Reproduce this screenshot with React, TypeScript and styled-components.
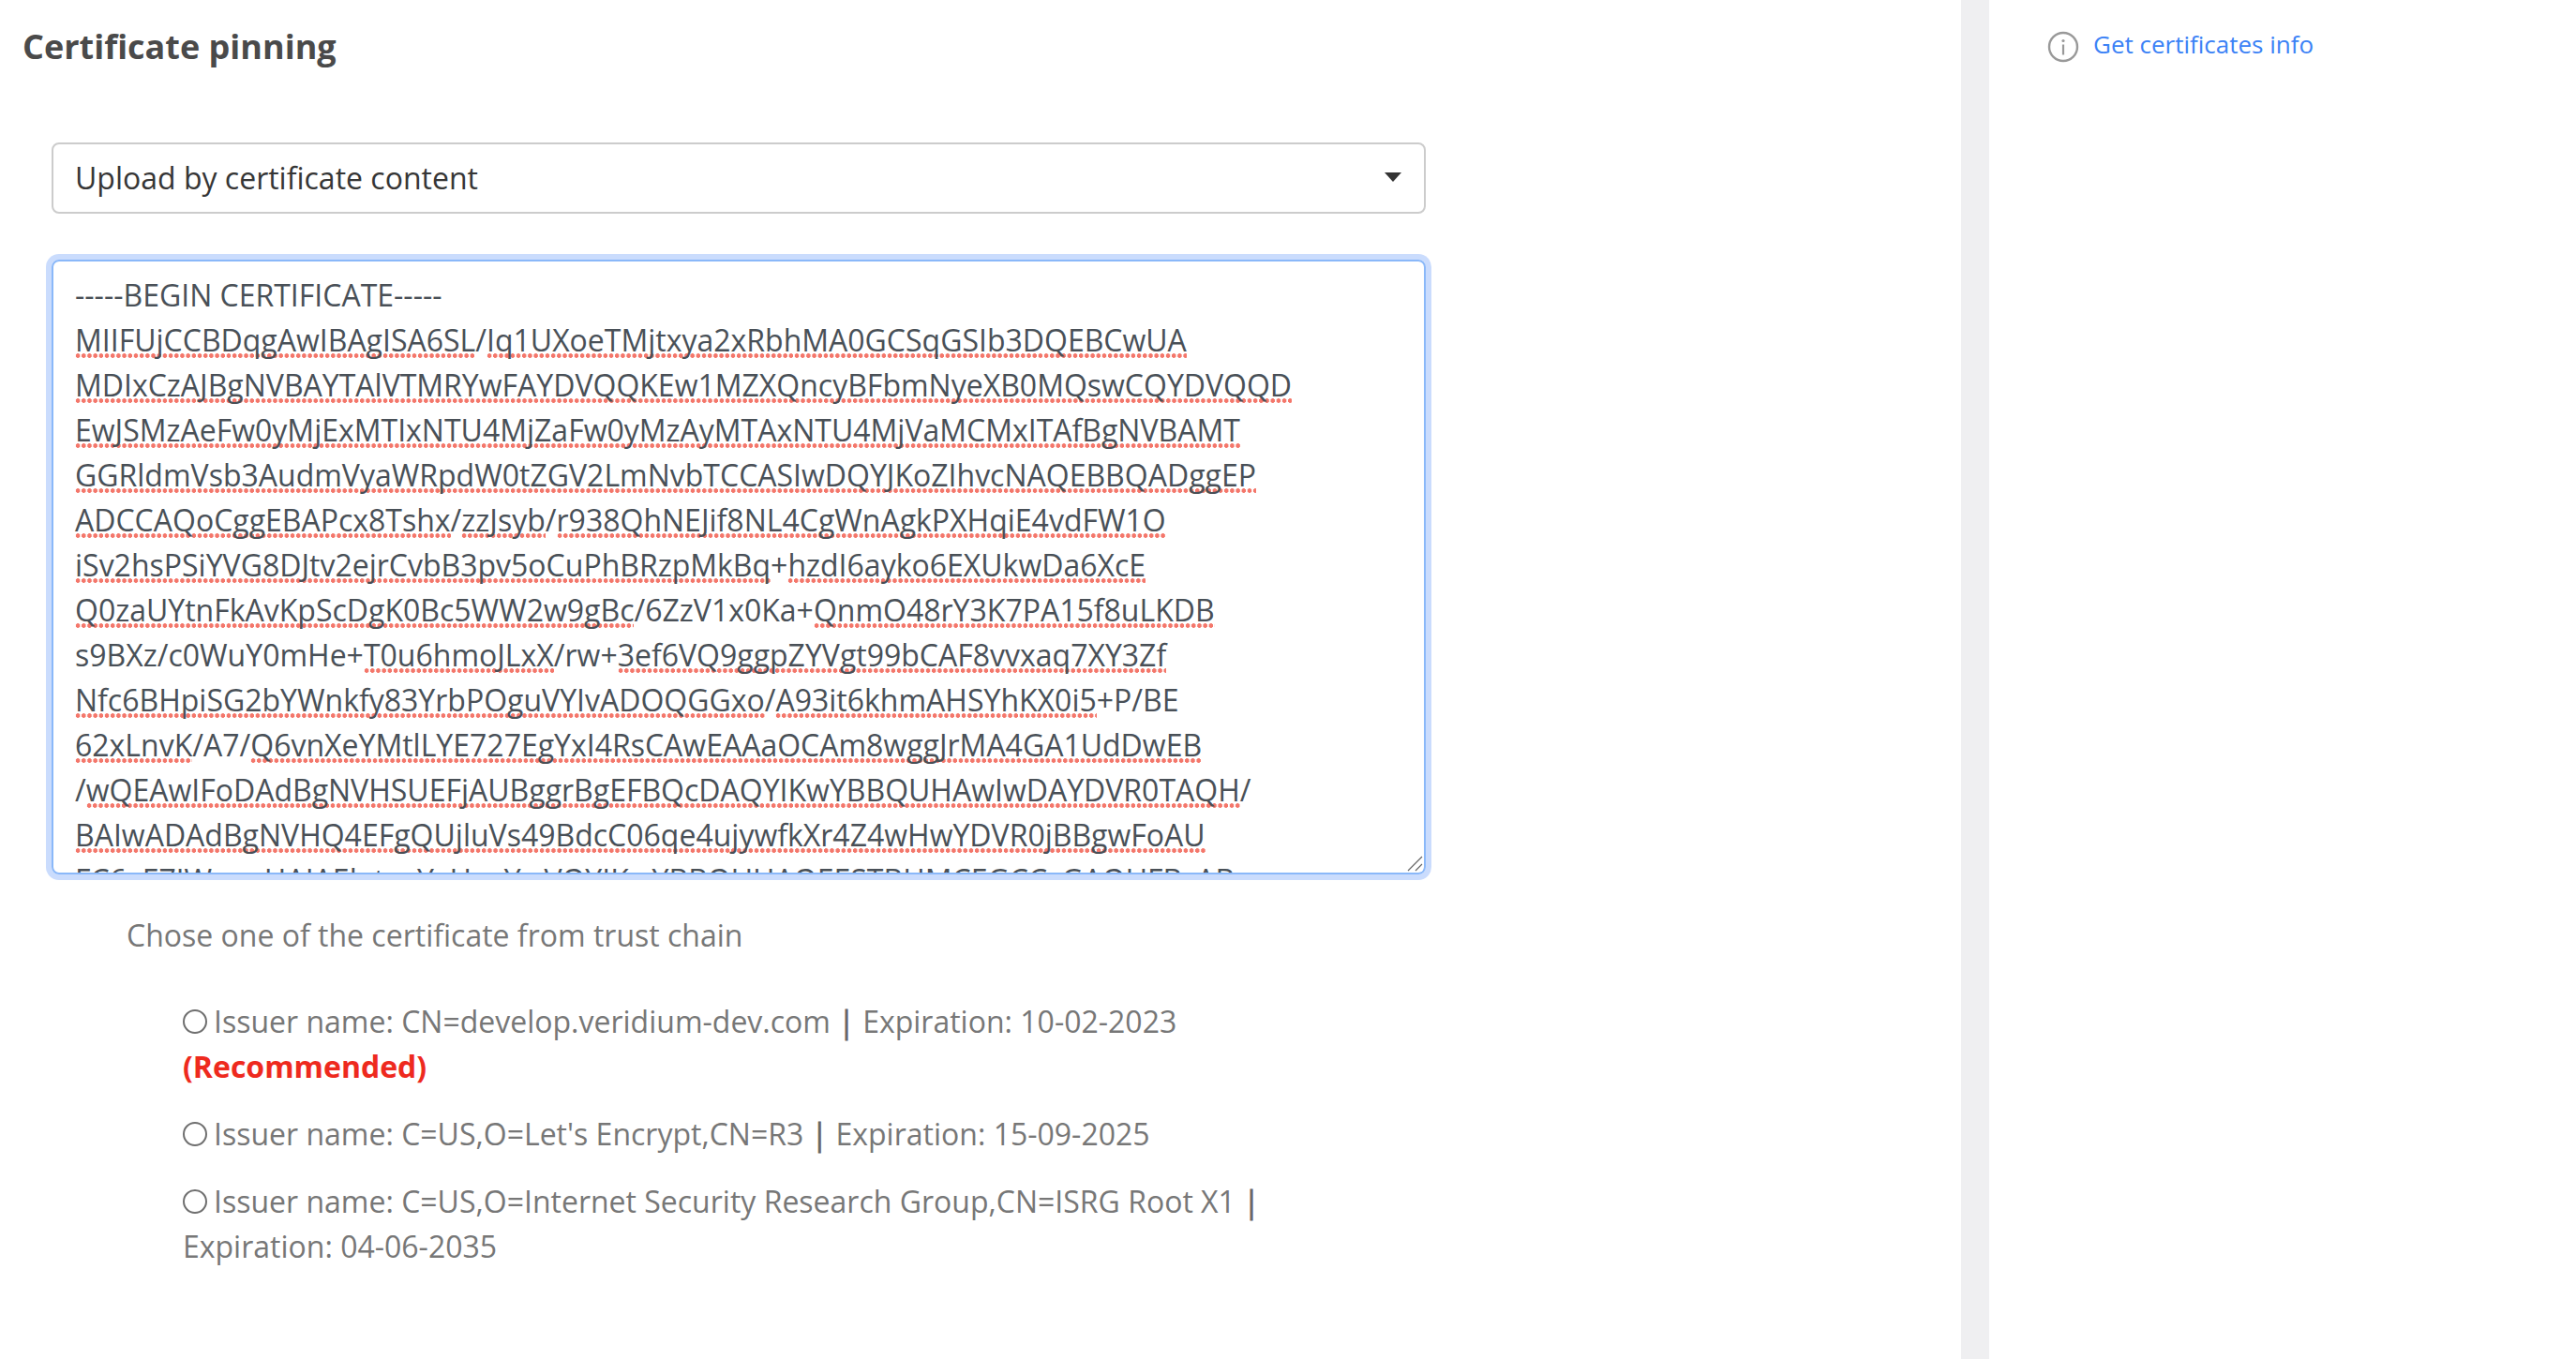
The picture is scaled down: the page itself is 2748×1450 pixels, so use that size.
import React from "react";
import styled, { createGlobalStyle } from "styled-components";

const Global = createGlobalStyle`
  html, body { margin: 0; padding: 0; background: #fff; }
  body { font-family: "Open Sans", "Liberation Sans", sans-serif; }
`;

const Page = styled.div`
  display: flex;
  height: 1450px;
  overflow: hidden;
  background: #fff;
`;

const Main = styled.main`
  width: 2092px;
  flex: none;
  padding: 26px 0 0 24px;
  box-sizing: border-box;
`;

const Divider = styled.div`
  width: 30px;
  flex: none;
  background: #efeff1;
`;

const Aside = styled.aside`
  flex: 1;
  display: flex;
  align-items: flex-start;
  gap: 15px;
  padding: 28px 0 0 62px;
`;

const Title = styled.h1`
  margin: 0;
  font-size: 36px;
  line-height: 48px;
  font-weight: 700;
  color: #4a4a4a;
`;

const Form = styled.div`
  width: 1466px;
  margin: 78px 0 0 31px;
`;

const SelectBox = styled.div`
  height: 76px;
  box-sizing: border-box;
  display: flex;
  align-items: center;
  justify-content: space-between;
  padding: 0 24px 2px 23px;
  border: 2px solid #cccccc;
  border-radius: 8px;
  font-size: 32px;
  color: #363636;
`;

const Caret = styled.span`
  width: 0;
  height: 0;
  border-left: 9px solid transparent;
  border-right: 9px solid transparent;
  border-top: 10px solid #333;
`;

const TextBox = styled.div`
  position: relative;
  height: 656px;
  box-sizing: border-box;
  margin-top: 49px;
  padding: 12px 23px 0;
  border: 2px solid #8ab8f9;
  border-radius: 8px;
  box-shadow: 0 0 0 6px #cadcfd;
  overflow: hidden;
  font-size: 32px;
  line-height: 48px;
  color: #495057;
  white-space: pre;
`;

const CertLine = styled.div`
  height: 48px;
`;

const Misspelled = styled.span`
  background-image: radial-gradient(circle at center, #f4776b 2.1px, transparent 2.6px);
  background-size: 6.2px 5px;
  background-repeat: repeat-x;
  background-position: left bottom 2px;
`;

const Grip = styled.svg`
  position: absolute;
  right: 1px;
  bottom: 1px;
  width: 17px;
  height: 17px;
  background: #fff;
`;

const Caption = styled.p`
  margin: 41px 0 0 80px;
  font-size: 32px;
  line-height: 48px;
  color: #777;
`;

const ChainList = styled.div`
  display: flex;
  flex-direction: column;
  gap: 24px;
  margin: 44px 0 0 140px;
  width: 1305px;
`;

const ChainRow = styled.label`
  display: block;
  font-size: 32px;
  line-height: 48px;
  color: #777;
`;

const Radio = styled.input`
  appearance: none;
  width: 26px;
  height: 26px;
  box-sizing: border-box;
  margin: 0 7px 0 0;
  border: 2px solid #6f6f6f;
  border-radius: 50%;
  background: #fff;
  vertical-align: -1px;
`;

const Pipe = styled.span`
  color: #666;
  -webkit-text-stroke: 0.8px #666;
`;

const Recommended = styled.strong`
  font-weight: 700;
  color: #ee2a1e;
`;

const InfoLink = styled.a`
  font-size: 26px;
  line-height: 38px;
  color: #3b82f6;
  text-decoration: none;
`;

const InfoIcon = styled.svg`
  width: 34px;
  height: 34px;
  flex: none;
  margin-top: 5px;
`;

const cert = [
  "-----BEGIN CERTIFICATE-----",
  "[MIIFUjCCBDqgAwIBAgISA6SL]/[Iq1UXoeTMjtxya2xRbhMA0GCSqGSIb3DQEBCwUA]",
  "[MDIxCzAJBgNVBAYTAlVTMRYwFAYDVQQKEw1MZXQncyBFbmNyeXB0MQswCQYDVQQD]",
  "[EwJSMzAeFw0yMjExMTIxNTU4MjZaFw0yMzAyMTAxNTU4MjVaMCMxITAfBgNVBAMT]",
  "[GGRldmVsb3AudmVyaWRpdW0tZGV2LmNvbTCCASIwDQYJKoZIhvcNAQEBBQADggEP]",
  "[ADCCAQoCggEBAPcx8Tshx]/[zzJsyb]/[r938QhNEJif8NL4CgWnAgkPXHqiE4vdFW1O]",
  "[iSv2hsPSiYVG8DJtv2ejrCvbB3pv5oCuPhBRzpMkBq]+[hzdI6ayko6EXUkwDa6XcE]",
  "[Q0zaUYtnFkAvKpScDgK0Bc5WW2w9gBc]/6ZzV1x0Ka+[QnmO48rY3K7PA15f8uLKDB]",
  "s9BXz/c0WuY0mHe+[T0u6hmoJLxX]/rw+[3ef6VQ9ggpZYVgt99bCAF8vvxaq7XY3Zf]",
  "[Nfc6BHpiSG2bYWnkfy83YrbPOguVYIvADOQGGxo]/[A93it6khmAHSYhKX0i5]+P/BE",
  "[62xLnvK]/A7/[Q6vnXeYMtlLYE727EgYxI4RsCAwEAAaOCAm8wggJrMA4GA1UdDwEB]",
  "/[wQEAwIFoDAdBgNVHSUEFjAUBggrBgEFBQcDAQYIKwYBBQUHAwIwDAYDVR0TAQH]/",
  "[BAIwADAdBgNVHQ4EFgQUjluVs49BdcC06qe4ujywfkXr4Z4wHwYDVR0jBBgwFoAU]",
  "FC6xE7JWqxqHAIAEl+txaYxHxaYwVQYIKwYBBQUHAQEESTBHMCEGCCsGAQUFBzAB",
];

const renderLine = (line: string) =>
  line.split(/(\[[^\]]+\])/).filter(Boolean).map((part, i) =>
    part.startsWith("[") ? <Misspelled key={i}>{part.slice(1, -1)}</Misspelled> : <span key={i}>{part}</span>
  );

export default function App() {
  return (
    <Page>
      <Global />
      <Main>
        <Title>Certificate pinning</Title>
        <Form>
          <SelectBox>
            Upload by certificate content
            <Caret />
          </SelectBox>
          <TextBox>
            {cert.map((line, i) => (
              <CertLine key={i}>{renderLine(line)}</CertLine>
            ))}
            <Grip viewBox="0 0 17 17">
              <path d="M1 16 L16 1 M9 16 L16 9" stroke="#666" strokeWidth="1.2" fill="none" />
            </Grip>
          </TextBox>
          <Caption>Chose one of the certificate from trust chain</Caption>
          <ChainList>
            <ChainRow>
              <Radio type="radio" name="chain" />
              Issuer name: CN=develop.veridium-dev.com <Pipe>|</Pipe> Expiration: 10-02-2023 <Recommended>(Recommended)</Recommended>
            </ChainRow>
            <ChainRow>
              <Radio type="radio" name="chain" />
              Issuer name: C=US,O=Let's Encrypt,CN=R3 <Pipe>|</Pipe> Expiration: 15-09-2025
            </ChainRow>
            <ChainRow>
              <Radio type="radio" name="chain" />
              Issuer name: C=US,O=Internet Security Research Group,CN=ISRG Root X1 <Pipe>|</Pipe> Expiration: 04-06-2035
            </ChainRow>
          </ChainList>
        </Form>
      </Main>
      <Divider />
      <Aside>
        <InfoIcon viewBox="0 0 34 34">
          <circle cx="17" cy="17" r="15" fill="none" stroke="#999" strokeWidth="2.4" />
          <circle cx="17" cy="10.5" r="1.6" fill="#999" />
          <rect x="15.9" y="14.5" width="2.2" height="11" fill="#999" />
        </InfoIcon>
        <InfoLink href="#">Get certificates info</InfoLink>
      </Aside>
    </Page>
  );
}
